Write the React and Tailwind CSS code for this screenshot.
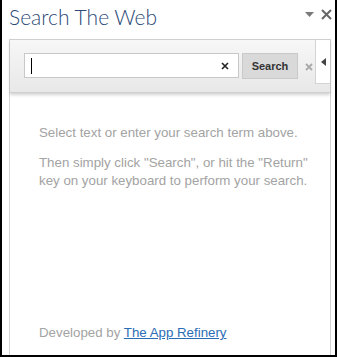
import React from 'react';

const App = () => {
  return (
    <div className="w-[337px] h-[357px] bg-white border-x-2 border-b-2 border-black flex flex-col overflow-hidden" style={{ fontFamily: '"Liberation Sans", Arial, sans-serif' }}>
      {/* Header */}
      <div className="h-[39px] flex items-start justify-between pl-[7px] pr-[3px] shrink-0">
        <h1 className="mt-[3px] text-[21px] leading-[28px] font-light text-[#2d4a77]" style={{ fontFamily: 'Lato, "Open Sans", sans-serif' }}>
          Search The Web
        </h1>
        <div className="flex items-center gap-[7px] mt-[9px]">
          <svg width="9" height="6" viewBox="0 0 9 6"><path d="M0 0h9L4.5 5z" fill="#7a7a7a" /></svg>
          <svg width="11" height="11" viewBox="0 0 11 11"><path d="M1 1l9 9M10 1l-9 9" stroke="#666" strokeWidth="2" /></svg>
        </div>
      </div>

      {/* Panel */}
      <div className="ml-[7px] w-[322px] flex-1 border-x border-[#d4d4d4] flex flex-col relative">
        {/* Toolbar */}
        <div className="h-[54px] flex items-start bg-gradient-to-b from-[#f7f7f7] to-[#e8e8e8] border-t border-b border-[#cfcfcf] shadow-[0_2px_3px_rgba(0,0,0,0.18)] shrink-0">
          <div className="mt-[13px] ml-[14px] w-[215px] h-[25px] bg-white border border-[#c8c8c8] flex items-center pl-[6px] pr-[9px]">
            <div className="w-px h-[16px] bg-black" />
            <div className="flex-1" />
            <svg width="8" height="8" viewBox="0 0 8 8"><path d="M1 1l6 6M7 1l-6 6" stroke="#222" strokeWidth="1.6" /></svg>
          </div>
          <button className="mt-[13px] ml-[3px] w-[56px] h-[26px] bg-[#d9d9d9] border border-[#c9c9c9] text-[11px] font-bold text-[#333]">
            Search
          </button>
          <svg className="mt-[23px] ml-[7px]" width="8" height="8" viewBox="0 0 8 8"><path d="M1 1l6 6M7 1l-6 6" stroke="#aaa" strokeWidth="1.8" /></svg>
          <div className="ml-auto w-[15px] h-[44px] bg-white border-l border-b border-[#d4d4d4] flex items-center justify-center">
            <svg width="5" height="8" viewBox="0 0 5 8"><path d="M5 0v8L0 4z" fill="#444" /></svg>
          </div>
        </div>

        {/* Body */}
        <div className="flex-1 flex flex-col pl-[29px] pr-[10px] pt-[31px] pb-[13px] text-[13.3px] leading-[18px] text-[#a3a3a3]">
          <p>Select text or enter your search term above.</p>
          <p className="mt-[12px]">
            Then simply click "Search", or hit the "Return" key on your keyboard to perform your search.
          </p>
          <div className="mt-auto text-[13.3px]">
            Developed by <a href="#" className="text-[#2a6db5] underline">The App Refinery</a>
          </div>
        </div>
      </div>
    </div>
  );
};

export default App;
